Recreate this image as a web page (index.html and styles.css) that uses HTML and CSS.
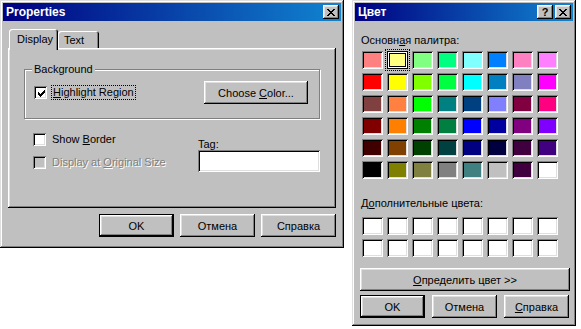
FILE: index.html
```html
<!DOCTYPE html>
<html>
<head>
<meta charset="utf-8">
<link rel="stylesheet" href="styles.css">
</head>
<body>
<div class="desk">
  <div class="win win-props">
    <div class="titlebar">
      <span class="title">Properties</span>
      <span class="tbtns">
        <span class="tbtn"><svg width="8" height="7" viewBox="0 0 8 7" shape-rendering="crispEdges"><path d="M0 0h2v1H0zM6 0h2v1H6zM1 1h2v1H1zM5 1h2v1H5zM2 2h4v1H2zM3 3h2v1H3zM2 4h4v1H2zM1 5h2v1H1zM5 5h2v1H5zM0 6h2v1H0zM6 6h2v1H6z" fill="#000"/></svg></span>
      </span>
    </div>
    <div class="tabs">
      <div class="tab sel">Display</div>
      <div class="tab">Text</div>
    </div>
    <div class="panel">
      <div class="group">
        <span class="legend">Background</span>
        <div class="grow">
          <div class="chk">
            <span class="box"><svg width="7" height="7" viewBox="0 0 7 7" shape-rendering="crispEdges"><path d="M6 0h1v1H6zM5 1h2v1H5zM0 2h1v1H0zM4 2h3v1H4zM0 3h2v1H0zM3 3h3v1H3zM0 4h5v1H0zM1 5h3v1H1zM2 6h1v1H2z" fill="#000"/></svg></span>
            <span class="lbl focus"><u>H</u>ighlight Region</span>
          </div>
          <div class="btn btn-choose"><span>Choose <u>C</u>olor...</span></div>
        </div>
      </div>
      <div class="lower">
        <div class="col">
          <div class="chk">
            <span class="box"></span>
            <span class="lbl">Show <u>B</u>order</span>
          </div>
          <div class="chk dis">
            <span class="box"></span>
            <span class="lbl">Display at <u>O</u>riginal Size</span>
          </div>
        </div>
        <div class="tagcol">
          <div class="taglbl">Tag:</div>
          <div class="field"></div>
        </div>
      </div>
    </div>
    <div class="btnrow">
      <div class="btn def">OK</div>
      <div class="btn">Отмена</div>
      <div class="btn">Справка</div>
    </div>
  </div>

  <div class="win win-color">
    <div class="titlebar">
      <span class="title">Цвет</span>
      <span class="tbtns">
        <span class="tbtn q">?</span>
        <span class="tbtn"><svg width="8" height="7" viewBox="0 0 8 7" shape-rendering="crispEdges"><path d="M0 0h2v1H0zM6 0h2v1H6zM1 1h2v1H1zM5 1h2v1H5zM2 2h4v1H2zM3 3h2v1H3zM2 4h4v1H2zM1 5h2v1H1zM5 5h2v1H5zM0 6h2v1H0zM6 6h2v1H6z" fill="#000"/></svg></span>
      </span>
    </div>
    <div class="clabel first">Основн<u>а</u>я палитра:</div>
    <div class="swgrid">
      <span class="sw" style="background:#ff8080"></span>
      <span class="sw selsw" style="background:#ffff80"></span>
      <span class="sw" style="background:#80ff80"></span>
      <span class="sw" style="background:#00ff80"></span>
      <span class="sw" style="background:#80ffff"></span>
      <span class="sw" style="background:#0080ff"></span>
      <span class="sw" style="background:#ff80c0"></span>
      <span class="sw" style="background:#ff80ff"></span>

      <span class="sw" style="background:#ff0000"></span>
      <span class="sw" style="background:#ffff00"></span>
      <span class="sw" style="background:#80ff00"></span>
      <span class="sw" style="background:#00ff40"></span>
      <span class="sw" style="background:#00ffff"></span>
      <span class="sw" style="background:#0080c0"></span>
      <span class="sw" style="background:#8080c0"></span>
      <span class="sw" style="background:#ff00ff"></span>

      <span class="sw" style="background:#804040"></span>
      <span class="sw" style="background:#ff8040"></span>
      <span class="sw" style="background:#00ff00"></span>
      <span class="sw" style="background:#008080"></span>
      <span class="sw" style="background:#004080"></span>
      <span class="sw" style="background:#8080ff"></span>
      <span class="sw" style="background:#800040"></span>
      <span class="sw" style="background:#ff0080"></span>

      <span class="sw" style="background:#800000"></span>
      <span class="sw" style="background:#ff8000"></span>
      <span class="sw" style="background:#008000"></span>
      <span class="sw" style="background:#008040"></span>
      <span class="sw" style="background:#0000ff"></span>
      <span class="sw" style="background:#0000a0"></span>
      <span class="sw" style="background:#800080"></span>
      <span class="sw" style="background:#8000ff"></span>

      <span class="sw" style="background:#400000"></span>
      <span class="sw" style="background:#804000"></span>
      <span class="sw" style="background:#004000"></span>
      <span class="sw" style="background:#004040"></span>
      <span class="sw" style="background:#000080"></span>
      <span class="sw" style="background:#000040"></span>
      <span class="sw" style="background:#400040"></span>
      <span class="sw" style="background:#400080"></span>

      <span class="sw" style="background:#000000"></span>
      <span class="sw" style="background:#808000"></span>
      <span class="sw" style="background:#808040"></span>
      <span class="sw" style="background:#808080"></span>
      <span class="sw" style="background:#408080"></span>
      <span class="sw" style="background:#c0c0c0"></span>
      <span class="sw" style="background:#400040"></span>
      <span class="sw" style="background:#ffffff"></span>
    </div>
    <div class="clabel second">Д<u>о</u>полнительные цвета:</div>
    <div class="swgrid custom">
      <span class="sw"></span><span class="sw"></span><span class="sw"></span><span class="sw"></span>
      <span class="sw"></span><span class="sw"></span><span class="sw"></span><span class="sw"></span>
      <span class="sw"></span><span class="sw"></span><span class="sw"></span><span class="sw"></span>
      <span class="sw"></span><span class="sw"></span><span class="sw"></span><span class="sw"></span>
    </div>
    <div class="btn btn-define"><span><u>О</u>пределить цвет &gt;&gt;</span></div>
    <div class="cbtnrow">
      <div class="btn def">OK</div>
      <div class="btn">Отмена</div>
      <div class="btn"><span><u>С</u>правка</span></div>
    </div>
  </div>
</div>
</body>
</html>
```
FILE: styles.css
```css
* { box-sizing: border-box; }
html, body { margin: 0; padding: 0; background: #fff; }
body {
  font-family: "Liberation Sans", Arial, sans-serif;
  font-size: 11px;
  color: #000;
}
u { text-decoration: underline; text-underline-offset: 1px; }

.desk {
  display: flex;
  align-items: flex-start;
  gap: 8px;
}

.win {
  background: #c0c0c0;
  padding: 3px;
  display: flex;
  flex-direction: column;
  box-shadow: inset -1px -1px 0 #000, inset 1px 1px 0 #dfdfdf,
              inset -2px -2px 0 #808080, inset 2px 2px 0 #fff;
}
.win-props { width: 344px; height: 248px; }
.win-color { width: 224px; height: 326px; }

.titlebar {
  height: 18px;
  background: linear-gradient(90deg, #000080, #1084d0);
  color: #fff;
  display: flex;
  align-items: center;
  padding-left: 3px;
  padding-right: 2px;
}
.title { font-weight: bold; font-size: 12px; flex: 1; }
.tbtns { display: flex; gap: 2px; }
.tbtn {
  width: 16px; height: 14px;
  background: #c0c0c0;
  display: flex; align-items: center; justify-content: center;
  box-shadow: inset -1px -1px 0 #000, inset 1px 1px 0 #fff,
              inset -2px -2px 0 #808080, inset 2px 2px 0 #dfdfdf;
  color: #000;
}
.tbtn svg { margin-left: -1px; }
.tbtn.q { font-weight: bold; font-size: 11px; line-height: 14px; }

/* tabs */
.tabs {
  display: flex;
  align-items: flex-end;
  height: 19px;
  margin: 8px 0 0 5px;
  padding-left: 1px;
}
.tab {
  height: 17px;
  padding: 2px 6px 0 6px;
  background: #c0c0c0;
  border-radius: 3px 3px 0 0;
  box-shadow: inset 1px 1px 0 #fff, inset -1px 0 0 #000, inset -2px 0 0 #808080;
  line-height: 14px;
}
.tab.sel {
  height: 21px;
  width: 49px;
  margin-bottom: -2px;
  padding: 3px 0 0 8px;
  position: relative;
  z-index: 1;
}
.tab:not(.sel) { width: 41px; }

.panel {
  margin-left: 5px;
  width: 328px;
  height: 160px;
  padding: 21px 0 0 16px;
  box-shadow: inset -1px -1px 0 #000, inset 1px 1px 0 #fff,
              inset -2px -2px 0 #808080, inset 2px 2px 0 #dfdfdf;
}

.group {
  width: 296px;
  height: 50px;
  border: 1px solid #808080;
  box-shadow: inset 1px 1px 0 #fff, 1px 1px 0 #fff;
  display: flex;
  flex-direction: column;
}
.legend {
  display: block;
  width: fit-content;
  margin: -7px 0 0 7px;
  padding: 0 2px;
  background: #c0c0c0;
  line-height: 13px;
}
.grow {
  display: flex;
  align-items: center;
  margin-top: 5px;
  padding-left: 9px;
  padding-right: 11px;
}

.chk { display: flex; align-items: center; height: 15px; }
.box {
  width: 13px; height: 13px;
  background: #fff;
  display: flex; align-items: center; justify-content: center;
  box-shadow: inset 1px 1px 0 #808080, inset -1px -1px 0 #fff,
              inset 2px 2px 0 #000, inset -2px -2px 0 #dfdfdf;
  flex: none;
}
.box svg { margin: 1px 0 0 1px; }
.lbl { margin-left: 5px; padding: 0 1px; line-height: 13px; }
.focus { outline: 1px dotted #000; outline-offset: 0; }
.chk.dis .box { background: #c0c0c0; }
.chk.dis .lbl { color: #808080; text-shadow: 1px 1px 0 #fff; }

.btn {
  height: 23px;
  background: #c0c0c0;
  display: flex; align-items: center; justify-content: center;
  box-shadow: inset -1px -1px 0 #000, inset 1px 1px 0 #fff,
              inset -2px -2px 0 #808080, inset 2px 2px 0 #dfdfdf;
  white-space: nowrap;
}
.btn.def {
  border: 1px solid #000;
}
.btn-choose { margin-left: auto; width: 104px; }

.lower {
  display: flex;
  margin-top: 13px;
  padding-left: 9px;
}
.col { display: flex; flex-direction: column; gap: 8px; width: 165px; }
.tagcol { display: flex; flex-direction: column; padding-top: 6px; }
.taglbl { line-height: 12px; height: 12px; }
.field {
  width: 122px; height: 22px;
  background: #fff;
  box-shadow: inset 1px 1px 0 #808080, inset -1px -1px 0 #fff,
              inset 2px 2px 0 #000, inset -2px -2px 0 #dfdfdf;
}

.btnrow {
  display: flex;
  justify-content: flex-end;
  gap: 6px;
  margin-top: 6px;
  padding-right: 5px;
}
.btnrow .btn { width: 75px; }

/* color dialog */
.clabel { line-height: 13px; padding-left: 6px; }
.clabel.first { margin-top: 13px; }
.clabel.second { margin-top: 18px; }
.swgrid {
  display: grid;
  grid-template-columns: repeat(8, 21px);
  grid-auto-rows: 18px;
  gap: 4px;
  margin: 4px 0 0 7px;
}
.swgrid.custom { margin-top: 7px; }
.sw {
  display: block;
  background: #fff;
  box-shadow: inset 1px 1px 0 #808080, inset -1px -1px 0 #fff,
              inset 2px 2px 0 #000, inset -2px -2px 0 #dfdfdf;
}
.sw.selsw {
  outline: 1px dotted #000;
  outline-offset: 1px;
  box-shadow: inset 0 0 0 1px #000, inset 0 0 0 2px #fff, inset 0 0 0 3px #000;
}
.btn-define { width: 210px; margin: 11px 0 0 5px; }
.cbtnrow {
  display: flex;
  gap: 7px;
  margin: 4px 0 0 5px;
}
.cbtnrow .btn { width: 65px; }
```
